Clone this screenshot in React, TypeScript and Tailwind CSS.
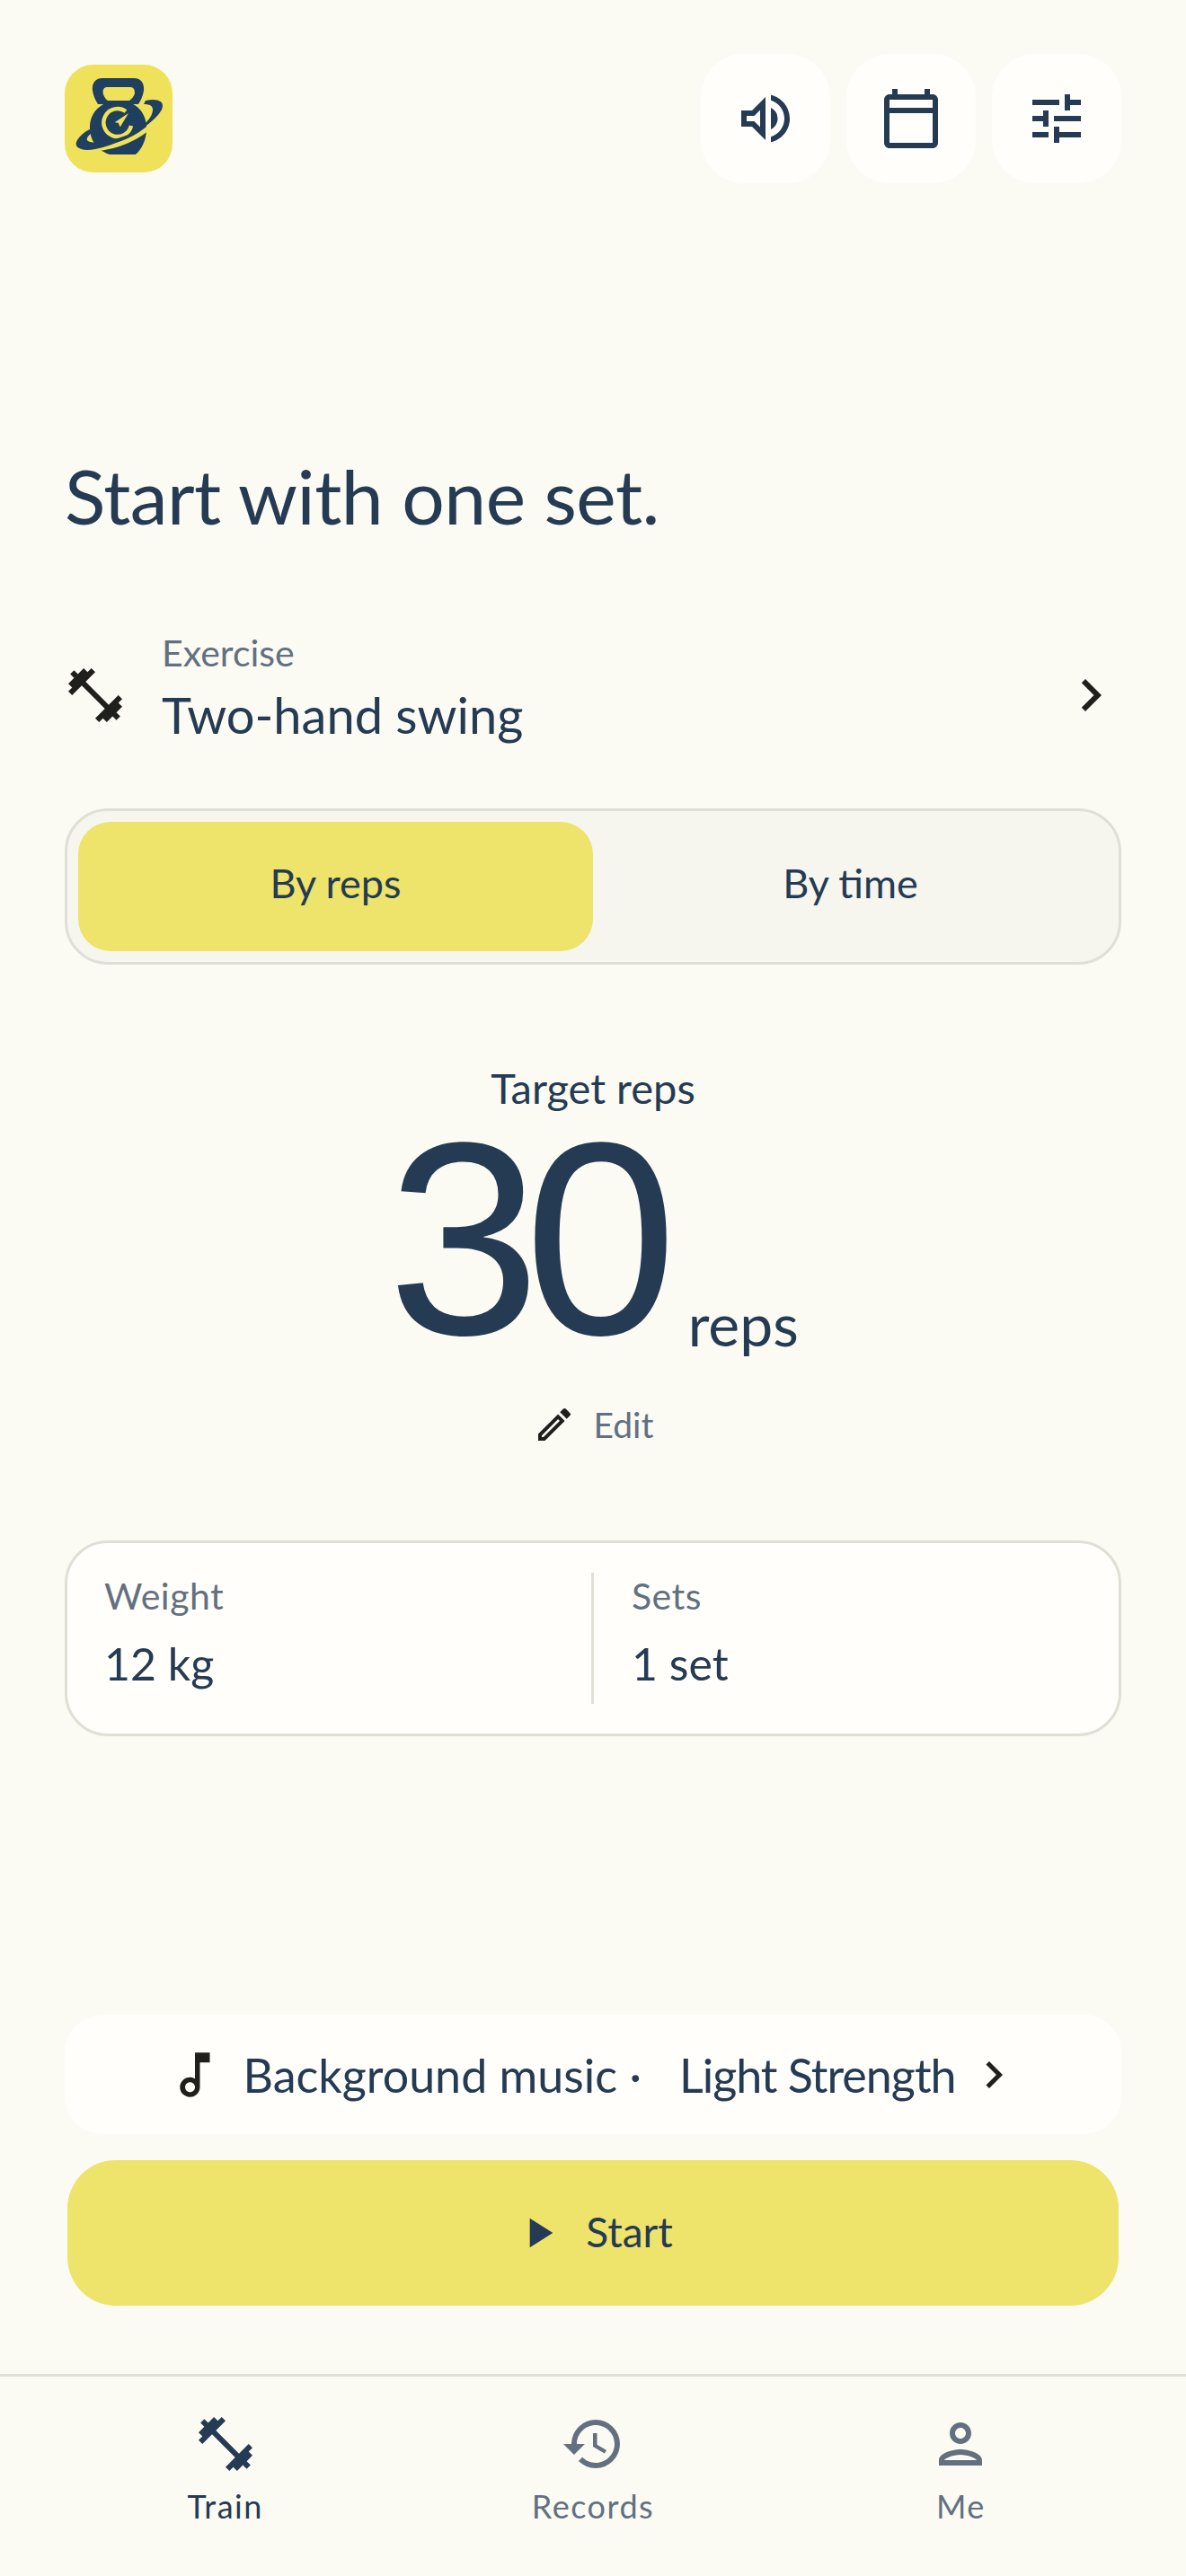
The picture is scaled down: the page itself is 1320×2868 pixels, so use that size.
import {
  MdChevronRight,
  MdFitnessCenter,
  MdHistory,
  MdOutlineCalendarToday,
  MdOutlineEdit,
  MdOutlineMusicNote,
  MdOutlinePerson,
  MdOutlineVolumeUp,
  MdPlayArrow,
  MdTune,
} from 'react-icons/md'

function Logo() {
  return (
    <div className="flex h-[120px] w-[120px] items-center justify-center rounded-[32px] bg-[#efe25a]">
      <svg viewBox="0 0 120 120" className="h-[120px] w-[120px]">
        {/* handle */}
        <path
          fillRule="evenodd"
          d="M42 15 L77 15 C85 15 89 21 88 29 C87 35 85 39 82 44 L37 44 C34 39 32 35 31 29 C30 21 34 15 42 15 Z M47 25 C43 25 42 29 43 33 C44 36 46 39 48 40 L72 40 C75 38 77 35 78 32 C78 28 77 25 73 25 Z"
          fill="#21405f"
        />
        {/* body */}
        <path
          d="M60 40 C78 40 90 52 91 68 C92 82 86 94 79 100 L50 100 C38 96 28 86 28 70 C28 52 42 40 60 40 Z"
          fill="#1f3f5e"
        />
        {/* gauge */}
        <path d="M68 52 A15.5 15.5 0 1 0 74 68" fill="none" stroke="#efe25a" strokeWidth="4.5" />
        <path d="M56 64 L71 54 L62 69 Z" fill="#efe25a" />
        <circle cx="58" cy="67" r="2.5" fill="#1f3f5e" />
        {/* orbit */}
        <path d="M34 94 C58 92 82 82 98 66" fill="none" stroke="#efe25a" strokeWidth="5" />
        <path
          d="M90 40 C104 37 112 41 108 50 C101 64 66 88 34 94 C18 97 9 92 14 84 C17 79 23 74 30 71 L30 76 C26 79 23 83 26 85 C32 89 52 85 68 79 C84 73 98 60 98 50 C98 46 95 44 88 44 Z"
          fill="#21405f"
        />
      </svg>
    </div>
  )
}

function IconButton({ children }: { children: React.ReactNode }) {
  return (
    <button className="flex h-[144px] w-[144px] items-center justify-center rounded-[48px] bg-[#fffefa] text-[#243b53]">
      {children}
    </button>
  )
}

function NavItem({
  icon,
  label,
  active,
}: {
  icon: React.ReactNode
  label: string
  active?: boolean
}) {
  return (
    <div className={`flex flex-1 flex-col items-center ${active ? 'text-[#243b53]' : 'text-[#627080]'}`}>
      {icon}
      <span className="mt-[9px] text-[36px] leading-[48px] tracking-[1.5px]">{label}</span>
    </div>
  )
}

export default function App() {
  return (
    <div className="flex h-[2868px] w-[1320px] flex-col bg-[#fbfaf3] font-['Lato',sans-serif] text-[#243b53]">
      <main className="flex flex-1 flex-col px-[72px] pt-[60px]">
        {/* Top bar */}
        <header className="flex items-center justify-between">
          <Logo />
          <div className="flex gap-[18px]">
            <IconButton><MdOutlineVolumeUp size={72} /></IconButton>
            <IconButton><MdOutlineCalendarToday size={72} /></IconButton>
            <IconButton><MdTune size={72} /></IconButton>
          </div>
        </header>

        <h1 className="mt-[292px] text-[84px] leading-[112px] font-normal tracking-[-0.5px]">Start with one set.</h1>

        {/* Exercise */}
        <div className="mt-[95px] flex items-center text-[#1f1f1c]">
          <MdFitnessCenter size={72} className="mt-[12px] -ml-[2px]" />
          <div className="ml-[38px] flex flex-1 flex-col">
            <span className="text-[41px] leading-[48px] text-[#627080]">Exercise</span>
            <span className="mt-[9px] text-[56px] leading-[72px] text-[#243b53]">Two-hand swing</span>
          </div>
          <MdChevronRight size={72} className="mt-[12px] -mr-[2px]" />
        </div>

        {/* Mode switch */}
        <div className="mt-[68px] flex h-[174px] rounded-[48px] border-[3px] border-[#dfe0d5] bg-[#f6f5ee] p-[12px]">
          <div className="flex flex-1 items-center justify-center rounded-[36px] bg-[#eee36b] pb-[6px] text-[45px]">By reps</div>
          <div className="flex flex-1 items-center justify-center pb-[6px] text-[45px]">By time</div>
        </div>

        {/* Target */}
        <div className="mt-[109px] flex flex-col items-center">
          <span className="text-[47px] leading-[56px]">Target reps</span>
          <div className="mt-[2px] flex items-end">
            <span className="font-['Liberation_Sans',sans-serif] text-[306px] leading-[276px] tracking-[-18px]">30</span>
            <span className="mb-[3px] ml-[30px] text-[66px] leading-[80px]">reps</span>
          </div>
          <div className="mt-[43px] flex items-center text-[#627080]">
            <MdOutlineEdit size={48} className="text-[#1f1f1c]" />
            <span className="ml-[20px] text-[39px] leading-[52px]">Edit</span>
          </div>
        </div>

        {/* Weight and sets */}
        <div className="mt-[103px] flex h-[218px] items-center rounded-[48px] border-[3px] border-[#dfe0d5] bg-[#fffefa] py-[33px]">
          <div className="flex h-full flex-1 flex-col justify-center pb-[8px] pl-[41px]">
            <span className="-mt-[4px] text-[41px] leading-[48px] tracking-[0.5px] text-[#627080]">Weight</span>
            <span className="mt-[19px] text-[50px] leading-[64px]">12 kg</span>
          </div>
          <div className="h-full w-[3px] bg-[#dfe0d5]" />
          <div className="flex h-full flex-1 flex-col justify-center pb-[8px] pl-[42px]">
            <span className="-mt-[4px] text-[41px] leading-[48px] tracking-[0.5px] text-[#627080]">Sets</span>
            <span className="mt-[19px] text-[50px] leading-[64px]">1 set</span>
          </div>
        </div>

        {/* Bottom actions */}
        <div className="mt-auto flex h-[133px] items-center justify-center rounded-[42px] bg-[#fffefa] text-[52px]">
          <MdOutlineMusicNote size={66} className="text-[#1f1f1c]" />
          <span className="ml-[20px]">Background music ·</span>
          <span className="ml-[42px] tracking-[-1px]">Light Strength</span>
          <MdChevronRight size={60} className="ml-[12px] text-[#1f1f1c]" />
        </div>
        <div className="mx-[3px] mt-[29px] mb-[76px] flex h-[162px] items-center justify-center rounded-[54px] bg-[#eee36b] text-[46px]">
          <MdPlayArrow size={56} />
          <span className="ml-[25px] pb-[4px]">Start</span>
        </div>
      </main>

      {/* Tab bar */}
      <nav className="flex h-[225px] border-t-[3px] border-[#dfe0d5] px-[46px] pt-[39px]">
        <NavItem active icon={<MdFitnessCenter size={72} />} label="Train" />
        <NavItem icon={<MdHistory size={72} />} label="Records" />
        <NavItem icon={<MdOutlinePerson size={72} />} label="Me" />
      </nav>
    </div>
  )
}
